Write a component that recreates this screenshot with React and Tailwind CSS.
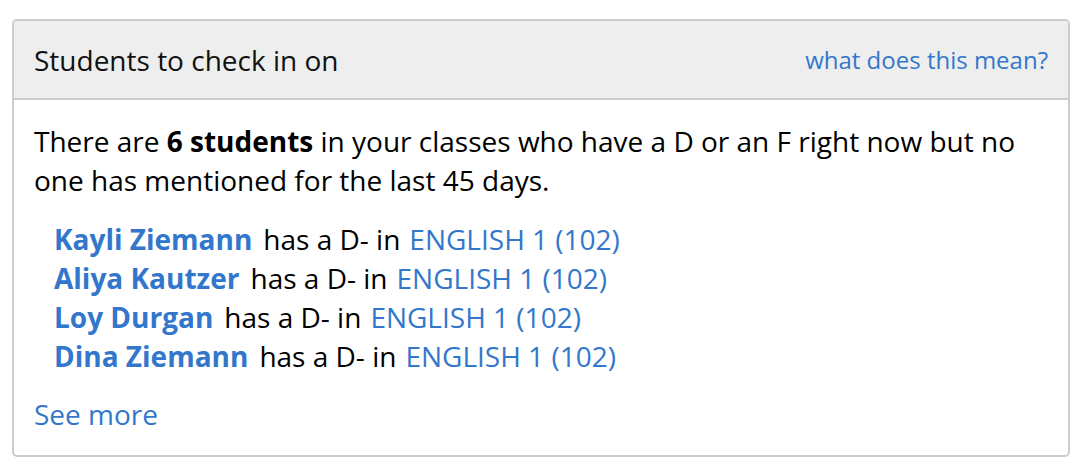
import React from "react";

const rows = [
  "Kayli Ziemann",
  "Aliya Kautzer",
  "Loy Durgan",
  "Dina Ziemann",
];

export default function App() {
  return (
    <div className="w-[1088px] h-[470px] bg-white pt-[19px] pl-[12px]" style={{ fontFamily: '"Open Sans", sans-serif' }}>
      <div className="w-[1058px] h-[438px] border-2 border-[#cccccc] rounded-[5px] overflow-hidden flex flex-col">
        <div className="h-[79px] bg-[#eeeeee] border-b-2 border-[#cccccc] flex items-center justify-between px-[20px] shrink-0">
          <span className="text-[28px] text-[#111111]">Students to check in on</span>
          <a className="text-[24px] text-[#3377cc]">what does this mean?</a>
        </div>
        <div className="px-[20px] pt-[22px] text-[28px] leading-[39px] text-black">
          <p>
            There are <b className="font-bold">6 students</b> in your classes who have a D or an F right now but no one has mentioned for the last 45 days.
          </p>
          <ul className="mt-[20px] pl-[20px]">
            {rows.map((n) => (
              <li key={n} className="flex">
                <a className="font-bold text-[#3377cc]">{n}</a>
                <span className="ml-[11px]">has a D- in</span>
                <a className="ml-[9px] text-[#3377cc]">ENGLISH 1 (102)</a>
              </li>
            ))}
          </ul>
          <a className="block mt-[19px] text-[#3377cc]">See more</a>
        </div>
      </div>
    </div>
  );
}
